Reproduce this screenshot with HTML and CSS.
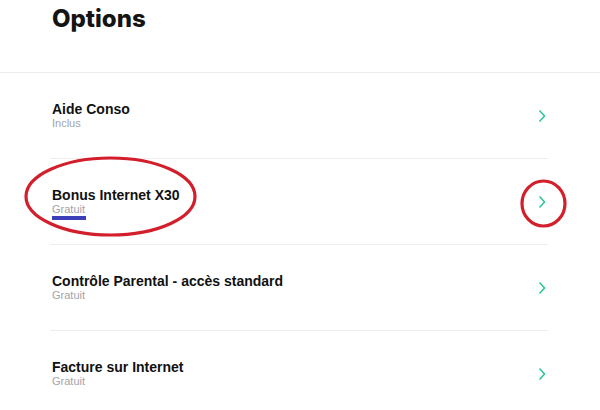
FILE: index.html
```html
<!DOCTYPE html>
<html lang="fr">
<head>
<meta charset="utf-8">
<title>Options</title>
<link rel="stylesheet" href="styles.css">
</head>
<body>
<div class="page">
  <header class="header">
    <h1 class="title">Options</h1>
  </header>
  <ul class="list">
    <li class="row">
      <div class="text">
        <div class="name">Aide Conso</div>
        <div class="sub">Inclus</div>
      </div>
      <svg class="chev" width="8" height="14" viewBox="0 0 8 14"><polyline points="1.5,1.5 6.5,7 1.5,12.5" /></svg>
    </li>
    <li class="row">
      <div class="text">
        <div class="name">Bonus Internet X30</div>
        <div class="sub">Gratuit<span class="mark"></span></div>
      </div>
      <svg class="chev" width="8" height="14" viewBox="0 0 8 14"><polyline points="1.5,1.5 6.5,7 1.5,12.5" /></svg>
    </li>
    <li class="row">
      <div class="text">
        <div class="name">Contrôle Parental - accès standard</div>
        <div class="sub">Gratuit</div>
      </div>
      <svg class="chev" width="8" height="14" viewBox="0 0 8 14"><polyline points="1.5,1.5 6.5,7 1.5,12.5" /></svg>
    </li>
    <li class="row">
      <div class="text">
        <div class="name">Facture sur Internet</div>
        <div class="sub">Gratuit</div>
      </div>
      <svg class="chev" width="8" height="14" viewBox="0 0 8 14"><polyline points="1.5,1.5 6.5,7 1.5,12.5" /></svg>
    </li>
  </ul>
  <svg class="annot" width="600" height="410" viewBox="0 0 600 410">
    <ellipse cx="110.5" cy="196.5" rx="84.5" ry="38.5" />
    <ellipse cx="543.5" cy="203.5" rx="21.5" ry="22.5" />
  </svg>
</div>
</body>
</html>
```

FILE: styles.css
```css
html, body {
  margin: 0;
  padding: 0;
  background: #ffffff;
}

.page {
  position: relative;
  width: 600px;
  height: 410px;
  overflow: hidden;
  font-family: "Liberation Sans", Arial, sans-serif;
}

.header {
  height: 72px;
  border-bottom: 1px solid #ececec;
  padding-left: 52px;
}

.title {
  margin: 0;
  padding-top: 4px;
  font-family: Inter, "Liberation Sans", sans-serif;
  font-weight: 800;
  font-size: 24px;
  line-height: 29px;
  color: #141414;
}

.list {
  list-style: none;
  margin: 0 0 0 50px;
  padding: 0;
  width: 498px;
}

.row {
  height: 85px;
  border-bottom: 1px solid #eeeeee;
  display: flex;
  align-items: center;
  justify-content: space-between;
  padding: 0 2px;
}

.name {
  font-weight: 700;
  font-size: 14px;
  line-height: 16px;
  color: #111111;
}

.sub {
  position: relative;
  font-size: 11px;
  line-height: 13px;
  color: #a3a3a8;
}

.mark {
  position: absolute;
  left: 0;
  top: 13px;
  width: 34px;
  height: 4px;
  background: #3d3fb8;
}

.chev {
  display: block;
  margin-right: 0;
}

.chev polyline {
  fill: none;
  stroke: #2fc49c;
  stroke-width: 1.6;
}

.annot {
  position: absolute;
  top: 0;
  left: 0;
  pointer-events: none;
}

.annot ellipse {
  fill: none;
  stroke: #d21f2b;
  stroke-width: 3.2;
}
```
